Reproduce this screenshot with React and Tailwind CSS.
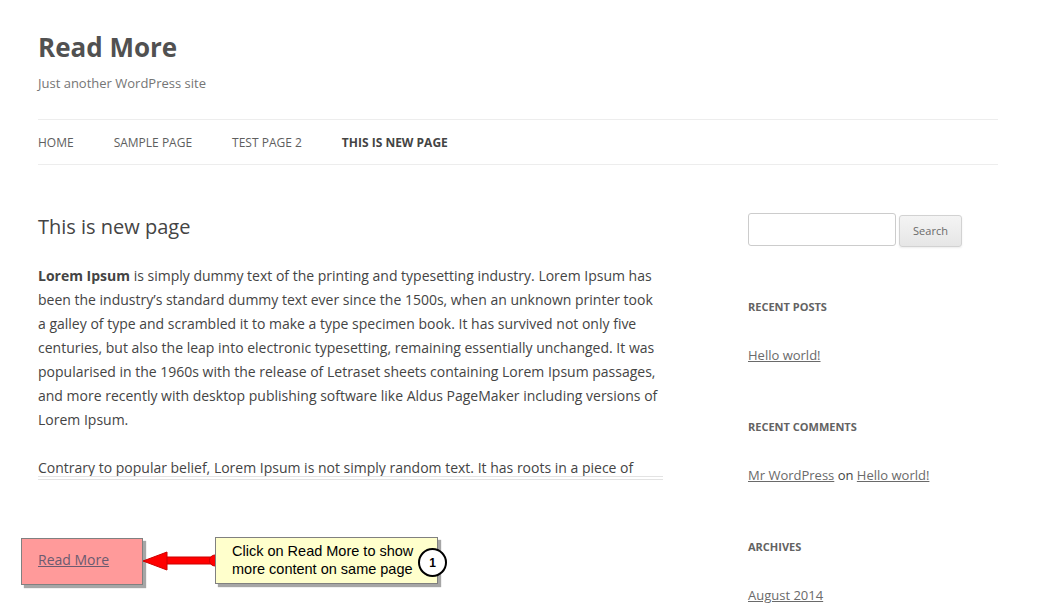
const sans = { fontFamily: '"Open Sans", "Liberation Sans", sans-serif' }

const navItems = ['Home', 'Sample Page', 'Test Page 2', 'This is new page']

function Widget({ title, children }) {
  return (
    <div className="mb-[50px]">
      <h3 className="h-5 text-[11px] font-bold uppercase leading-5 text-[#636363] mb-[26px]">{title}</h3>
      <div className="text-[13px] leading-6 text-[#444]">{children}</div>
    </div>
  )
}

// ── Callout drawn over the page (tutorial annotation)
function Annotation() {
  return (
    <>
      <div className="absolute left-[21px] top-[538px] w-[122px] h-[47px] bg-[#ff9a9a] border border-[#808080] shadow-[3px_3px_1px_rgba(0,0,0,0.35)] flex items-center pl-4 pb-[5px]">
        <span className="text-[14px] text-[#6b5b70] underline">Read More</span>
      </div>

      <svg className="absolute left-[138px] top-[545px]" width="86" height="32" viewBox="0 0 86 32">
        <rect x="27" y="12" width="50" height="7" fill="#f00" stroke="#c00" strokeWidth="1" />
        <polygon points="5,16 29,7 29,25" fill="#f00" stroke="#c00" strokeWidth="1" />
        <circle cx="77" cy="15.5" r="5.5" fill="#f00" stroke="#c00" strokeWidth="1" />
      </svg>

      <div
        className="absolute left-[215px] top-[537px] w-[223px] h-[47px] bg-[#ffffcc] border border-[#808080] shadow-[3px_3px_1px_rgba(0,0,0,0.35)] flex flex-col justify-center pl-4 pb-[2px] text-[14.5px] leading-[18px] text-black"
        style={{ fontFamily: '"Liberation Sans", Arial, sans-serif' }}
      >
        <span>Click on Read More to show</span>
        <span>more content on same page</span>
      </div>

      <div
        className="absolute left-[418px] top-[548px] w-[29px] h-[29px] rounded-full bg-white border-2 border-black flex items-center justify-center text-[12px] font-bold text-black"
        style={{ fontFamily: '"Liberation Sans", Arial, sans-serif' }}
      >
        1
      </div>
    </>
  )
}

export default function App() {
  return (
    <div className="relative h-[609px] overflow-hidden bg-white text-[#444]" style={sans}>
      <div className="w-[960px] ml-[38px] pt-6">
        {/* Header */}
        <header>
          <h1 className="text-[26px] font-bold leading-[47px] text-[#515151]">Read More</h1>
          <p className="text-[13px] leading-6 text-[#757575]">Just another WordPress site</p>

          <nav className="mt-[24px] border-t border-b border-[#ededed]">
            <ul className="flex h-[44px] items-center pt-[2px]">
              {navItems.map((item, i) => (
                <li
                  key={item}
                  className={`mr-10 text-[12px] uppercase ${
                    i === navItems.length - 1 ? 'font-bold text-[#444]' : 'text-[#5e5e5e]'
                  }`}
                >
                  {item}
                </li>
              ))}
            </ul>
          </nav>
        </header>

        {/* Main + sidebar */}
        <div className="flex justify-between pt-[24px]">
          <main className="w-[625px]">
            <h2 className="mt-[26px] text-[20px] leading-6 text-[#444]">This is new page</h2>

            <div className="mt-[25px] h-[216px] overflow-hidden border-b-[4px] border-double border-[#e3e3e3]">
              <p className="text-[14px] leading-6 text-[#444]">
                <strong>Lorem Ipsum</strong> is simply dummy text of the printing and typesetting industry. Lorem Ipsum
                has been the industry’s standard dummy text ever since the 1500s, when an unknown printer took a galley
                of type and scrambled it to make a type specimen book. It has survived not only five centuries, but also
                the leap into electronic typesetting, remaining essentially unchanged. It was popularised in the 1960s
                with the release of Letraset sheets containing Lorem Ipsum passages, and more recently with desktop
                publishing software like Aldus PageMaker including versions of Lorem Ipsum.
              </p>
              <p className="mt-6 text-[14px] leading-6 text-[#444]">
                Contrary to popular belief, Lorem Ipsum is not simply random text. It has roots in a piece of classical
                Latin literature from 45 BC, making it over 2000 years old.
              </p>
            </div>
          </main>

          <aside className="w-[250px] pt-[24px]">
            <div className="flex items-start mb-[50px]">
              <input
                type="text"
                className="w-[148px] h-[33px] rounded-[3px] border border-[#ccc] bg-white"
              />
              <button className="ml-[3px] mt-[2px] w-[63px] h-[32px] rounded-[3px] border border-[#d2d2d2] bg-gradient-to-b from-[#f4f4f4] to-[#e6e6e6] text-[11px] text-[#6a6a6a] shadow-[0_1px_2px_rgba(64,64,64,0.1)]">
                Search
              </button>
            </div>

            <Widget title="Recent Posts">
              <a className="underline text-[#6a6a6a]">Hello world!</a>
            </Widget>

            <Widget title="Recent Comments">
              <a className="underline text-[#6a6a6a]">Mr WordPress</a> on{' '}
              <a className="underline text-[#6a6a6a]">Hello world!</a>
            </Widget>

            <Widget title="Archives">
              <a className="underline text-[#6a6a6a]">August 2014</a>
            </Widget>
          </aside>
        </div>
      </div>

      <Annotation />
    </div>
  )
}
